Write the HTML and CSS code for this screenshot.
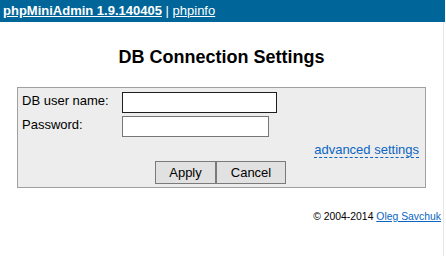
FILE: index.html
```html
<!DOCTYPE html>
<html>
<head>
<meta charset="utf-8">
<title>phpMiniAdmin</title>
<link rel="stylesheet" href="styles.css">
</head>
<body>
<div class="header">
  <a class="brand" href="#">phpMiniAdmin 1.9.140405</a> | <a class="hlink" href="#">phpinfo</a>
</div>
<div class="page">
  <h1 class="title">DB Connection Settings</h1>
  <div class="box">
    <div class="fields">
      <label class="lbl">DB user name:</label>
      <input class="inp inp-user" type="text">
      <label class="lbl">Password:</label>
      <input class="inp inp-pass" type="password">
    </div>
    <div class="adv-row"><a class="adv" href="#">advanced settings</a></div>
    <div class="btns">
      <button class="btn btn-apply">Apply</button><button class="btn btn-cancel">Cancel</button>
    </div>
  </div>
  <div class="footer">© 2004-2014 <a class="flink" href="#">Oleg Savchuk</a></div>
</div>
</body>
</html>
```
FILE: styles.css
```css
html, body {
  margin: 0;
  padding: 0;
  background: #fff;
}
body {
  font-family: "Liberation Sans", Arial, sans-serif;
  font-size: 13px;
  color: #000;
  width: 446px;
  height: 256px;
  overflow: hidden;
}
.header {
  width: 445px;
  height: 22px;
  line-height: 22px;
  background: #006699;
  color: #fff;
  padding-left: 3px;
  box-sizing: border-box;
  white-space: nowrap;
}
.header a {
  color: #fff;
  text-decoration: underline;
}
.brand {
  font-weight: bold;
}
.page {
  width: 443px;
  height: 234px;
  border-right: 1px solid #e6e6e6;
  display: flex;
  flex-direction: column;
}
.title {
  margin: 25px 0 0;
  font-size: 18px;
  font-weight: bold;
  text-align: center;
  line-height: 21px;
}
.box {
  margin: 19px 17px 0;
  width: 409px;
  box-sizing: border-box;
  border: 1px solid #a0a0a0;
  background: #ededed;
  padding: 4px 6px 3px 4px;
  display: flex;
  flex-direction: column;
}
.fields {
  display: grid;
  grid-template-columns: 100px auto;
  row-gap: 3px;
  align-items: center;
  justify-items: start;
}
.lbl {
  line-height: 15px;
  margin-top: -4px;
}
.inp {
  margin: 0;
  padding: 0 2px;
  height: 21px;
  box-sizing: border-box;
  background: #fff;
  font: 13px "Liberation Sans", Arial, sans-serif;
  outline: none;
}
.inp-user {
  width: 155px;
  border: 1px solid #1e1e1e;
}
.inp-pass {
  width: 147px;
  border: 1px solid #767676;
}
.adv-row {
  display: flex;
  justify-content: flex-end;
  margin-top: 5px;
  line-height: 15px;
}
.adv {
  color: #0a66c2;
  text-decoration: none;
  border-bottom: 1px dashed #0a66c2;
}
.btns {
  display: flex;
  justify-content: center;
  margin-top: 3px;
}
.btn {
  height: 23px;
  margin: 0;
  padding: 0;
  box-sizing: border-box;
  border: 1px solid #7a7a7a;
  background: #e1e1e1;
  font: 13px "Liberation Sans", Arial, sans-serif;
  color: #000;
}
.btn-apply { width: 61px; }
.btn-cancel { width: 70px; }
.footer {
  margin-top: 23px;
  padding-right: 2px;
  text-align: right;
  font-size: 10.4px;
  line-height: 12px;
}
.flink {
  color: #0a66c2;
  text-decoration: underline;
}
```
